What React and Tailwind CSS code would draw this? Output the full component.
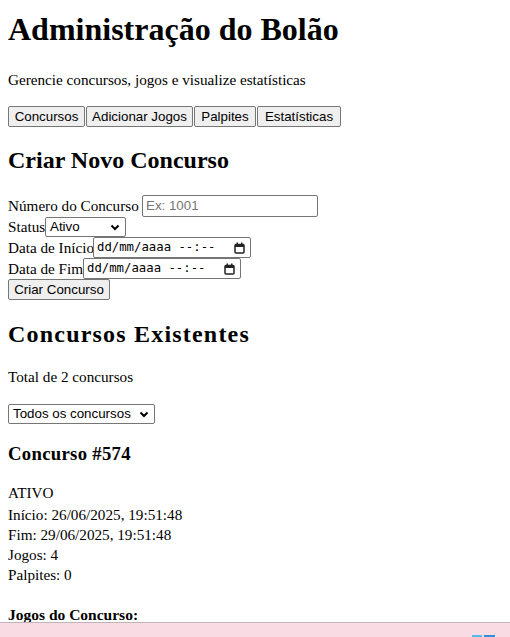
import React from "react";

const sans = "font-['Liberation_Sans',Arial,sans-serif]";

const Btn = ({ children, w }) => (
  <button
    className={`${sans} h-[21px] text-[13.33px] leading-[15px] text-black bg-[#efefef] border border-[#767676] rounded-[2px] ${w}`}
  >
    {children}
  </button>
);

const Chevron = () => (
  <svg width="10" height="7" viewBox="0 0 10 7" className="shrink-0">
    <polyline points="1.5,1.5 5,5 8.5,1.5" fill="none" stroke="#000" strokeWidth="2" />
  </svg>
);

const FakeSelect = ({ value, width }) => (
  <div
    className={`${sans} h-[20px] flex items-center justify-between pl-[4px] pr-[5px] text-[13.33px] text-black bg-white border border-[#767676] rounded-[2px]`}
    style={{ width }}
  >
    <span>{value}</span>
    <Chevron />
  </div>
);

const CalendarIcon = () => (
  <svg width="11" height="12" viewBox="0 0 11 12" className="shrink-0">
    <rect x="1" y="2.5" width="9" height="8.5" rx="1" fill="none" stroke="#222" strokeWidth="1.5" />
    <rect x="1" y="2" width="9" height="3" fill="#222" />
    <rect x="2.5" y="0.5" width="1.5" height="2" fill="#222" />
    <rect x="7" y="0.5" width="1.5" height="2" fill="#222" />
  </svg>
);

const DateField = () => (
  <div className="w-[158px] h-[21px] flex items-center justify-between pl-[3px] pr-[5px] bg-white border border-[#767676] rounded-[2px]">
    <span className="font-['DejaVu_Sans_Mono',monospace] text-[12.3px] text-black whitespace-pre">dd/mm/aaaa --:--</span>
    <CalendarIcon />
  </div>
);

export default function App() {
  return (
    <div className="relative min-h-[637px] bg-white font-['Liberation_Serif','Times_New_Roman',serif] text-black text-[15.2px] px-[8px]">
      <h1 className="pt-[11px] text-[32px] leading-[37px] font-bold">Administração do Bolão</h1>
      <p className="mt-[23px] leading-[18px]">Gerencie concursos, jogos e visualize estatísticas</p>

      <div className="mt-[17px] flex gap-[1px]">
        <Btn w="w-[77px]">Concursos</Btn>
        <Btn w="w-[107px]">Adicionar Jogos</Btn>
        <Btn w="w-[62px]">Palpites</Btn>
        <Btn w="w-[84px]">Estatísticas</Btn>
      </div>

      <h2 className="mt-[19px] text-[24px] leading-[28px] font-bold">Criar Novo Concurso</h2>

      <div className="mt-[21px] flex flex-col">
        <div className="h-[22px] flex items-center">
          <span className="leading-[18px] w-[134px]">Número do Concurso</span>
          <div className={`${sans} w-[176px] h-[22px] flex items-center px-[3px] text-[13.33px] text-[#757575] bg-white border border-[#767676] rounded-[2px]`}>
            Ex: 1001
          </div>
        </div>
        <div className="h-[20px] flex items-center">
          <span className="leading-[18px] w-[37px]">Status</span>
          <FakeSelect value="Ativo" width={81} />
        </div>
        <div className="h-[21px] flex items-center">
          <span className="leading-[18px] w-[85px] whitespace-nowrap">Data de Início</span>
          <DateField />
        </div>
        <div className="h-[21px] flex items-center">
          <span className="leading-[18px] w-[75px] whitespace-nowrap">Data de Fim</span>
          <DateField />
        </div>
        <div className="flex">
          <button
            className={`${sans} w-[102px] h-[21px] text-[13.33px] leading-[15px] text-black bg-[#efefef] border border-[#767676] rounded-[2px]`}
          >
            Criar Concurso
          </button>
        </div>
      </div>

      <h2 className="mt-[20px] text-[24px] leading-[28px] font-bold tracking-[1.2px]">Concursos Existentes</h2>
      <p className="mt-[20px] leading-[18px]">Total de 2 concursos</p>
      <div className="mt-[18px] flex">
        <FakeSelect value="Todos os concursos" width={147} />
      </div>

      <h3 className="mt-[19px] text-[18.72px] leading-[22px] font-bold tracking-[0.3px]">Concurso #574</h3>
      <div className="mt-[17px]">
        <div className="leading-[22px]">ATIVO</div>
        <div className="leading-[21px]">Início: 26/06/2025, 19:51:48</div>
        <div className="leading-[20px]">Fim: 29/06/2025, 19:51:48</div>
        <div className="leading-[20px]">Jogos: 4</div>
        <div className="leading-[20px]">Palpites: 0</div>
      </div>
      <h4 className="mt-[21px] leading-[18px] font-bold text-[15.5px]">Jogos do Concurso:</h4>

      <div className="fixed left-0 right-0 bottom-0 h-[15px] bg-[#f9dbe3] border-t border-[#bfb4b7]">
        <div className="absolute bottom-0 left-[472px] w-[10px] h-[2px] bg-[#5ab6ee]" />
        <div className="absolute bottom-0 left-[484px] w-[11px] h-[2px] bg-[#2e8edd]" />
      </div>
    </div>
  );
}
